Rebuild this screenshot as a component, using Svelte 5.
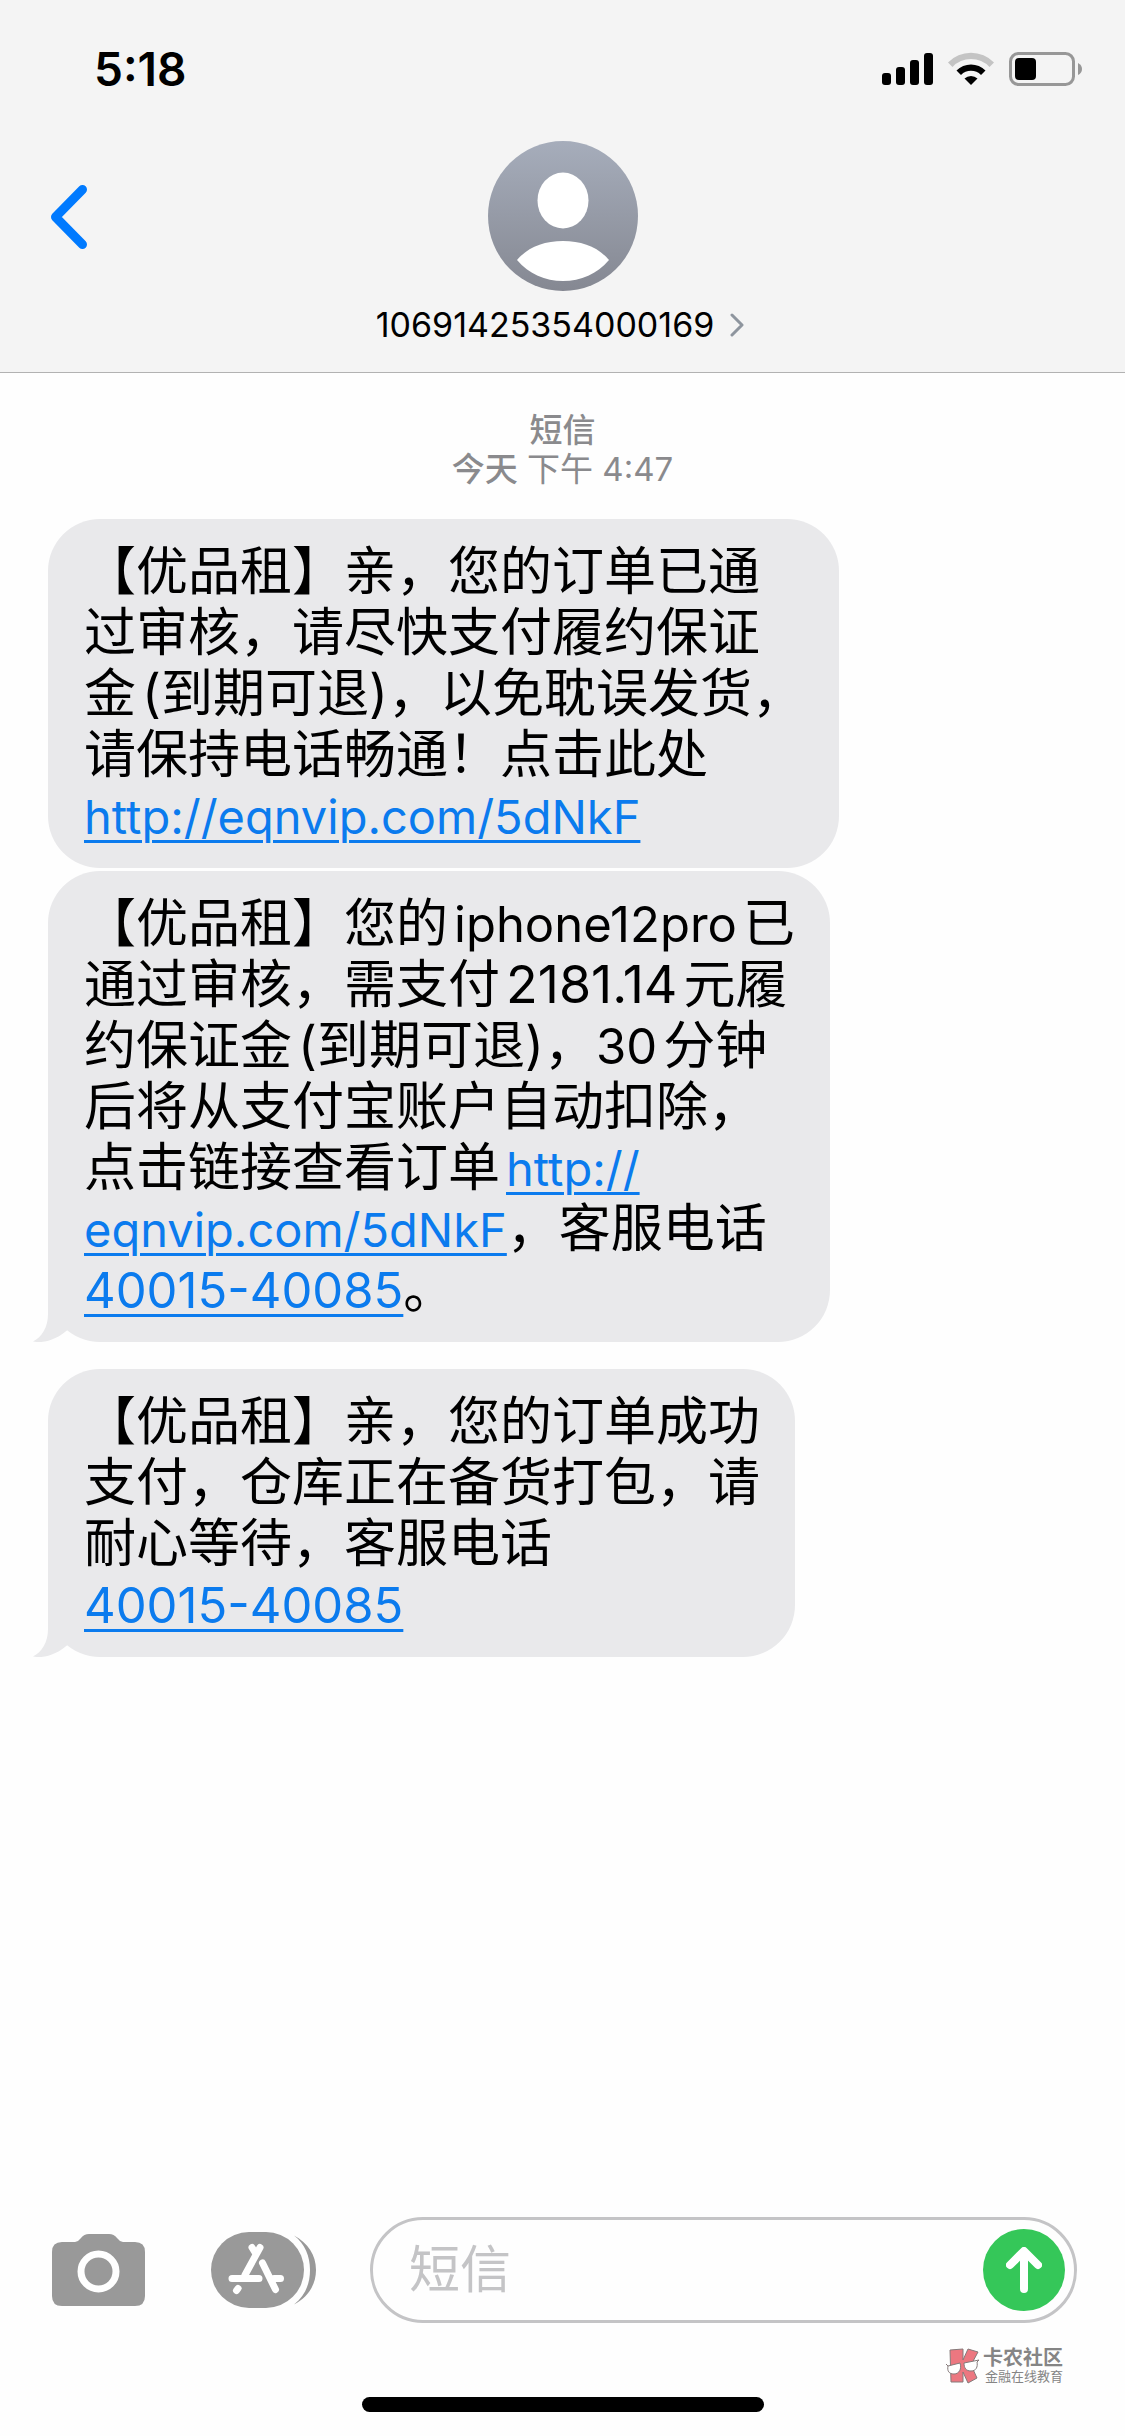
<script>
  let draft = '';

  const time = '5:18';
  const sender = '10691425354000169';

  // each line is a list of parts, k is the class of the part
  const messages = [
    {
      tail: false,
      lines: [
        [{ t: '【优品租】亲，您的订单已通' }],
        [{ t: '过审核，请尽快支付履约保证' }],
        [{ t: '金' }, { t: '(', k: 'open' }, { t: '到期可退' }, { t: ')' }, { t: '，以免耽误发货，' }],
        [{ t: '请保持电话畅通！点击此处' }],
        [{ t: 'http://eqnvip.com/5dNkF', k: 'link', href: 'http://eqnvip.com/5dNkF' }]
      ]
    },
    {
      tail: true,
      lines: [
        [{ t: '【优品租】您的' }, { t: 'iphone12pro', k: 'latin' }, { t: '已' }],
        [{ t: '通过审核，需支付' }, { t: '2181.14', k: 'number' }, { t: '元履' }],
        [{ t: '约保证金' }, { t: '(', k: 'open' }, { t: '到期可退' }, { t: ')' }, { t: '，' }, { t: '30', k: 'count' }, { t: '分钟' }],
        [{ t: '后将从支付宝账户自动扣除，' }],
        [{ t: '点击链接查看订单' }, { t: 'http://', k: 'link inset', href: 'http://eqnvip.com/5dNkF' }],
        [{ t: 'eqnvip.com/5dNkF', k: 'link', href: 'http://eqnvip.com/5dNkF' }, { t: '，客服电话' }],
        [{ t: '40015-40085', k: 'link tel', href: 'tel:4001540085' }, { t: '。' }]
      ]
    },
    {
      tail: true,
      lines: [
        [{ t: '【优品租】亲，您的订单成功' }],
        [{ t: '支付，仓库正在备货打包，请' }],
        [{ t: '耐心等待，客服电话' }],
        [{ t: '40015-40085', k: 'link tel', href: 'tel:4001540085' }]
      ]
    }
  ];
</script>

<div class="screen">
  <header>
    <div class="status">
      <span class="time">{time}</span>
      <svg width="200" height="34" viewBox="0 0 200 34" aria-hidden="true">
        <rect x="0" y="21" width="9" height="12" rx="3" />
        <rect x="14" y="15" width="9" height="18" rx="3" />
        <rect x="28" y="8" width="9" height="25" rx="3" />
        <rect x="42" y="1" width="9" height="32" rx="3" />
        <path d="M66 10.500A32 32 0 0 1 112 10.500L107.500 15A25.500 25.500 0 0 0 70.500 15Z" fill="#c4c4c4" />
        <path d="M74.500 18.500A20.500 20.500 0 0 1 103.500 18.500L99 23A14 14 0 0 0 79 23Z" />
        <path d="M82.500 26.500A9.500 9.500 0 0 1 95.500 26.500L89 33Z" />
        <rect x="128.500" y="1.500" width="63" height="31" rx="8" fill="none" stroke="#979797" stroke-width="3" />
        <rect x="133" y="6" width="21" height="22" rx="4" />
        <path d="M196 11Q200 13 200 17T196 23Z" fill="#979797" />
      </svg>
    </div>
    <div class="nav">
      <button class="back" aria-label="返回">
        <svg width="38" height="68" viewBox="0 0 38 68">
          <path d="M32.500 6.500L5.500 34L32.500 61.500" fill="none" stroke="#007aff" stroke-width="9" stroke-linecap="round" stroke-linejoin="round" />
        </svg>
      </button>
      <button class="contact">
        <svg width="150" height="150" viewBox="0 0 150 150" aria-hidden="true">
          <defs>
            <linearGradient id="avatar" x1="0" y1="0" x2="0" y2="1">
              <stop offset="0" stop-color="#a6adbb" />
              <stop offset="1" stop-color="#858892" />
            </linearGradient>
          </defs>
          <circle cx="75" cy="75" r="75" fill="url(#avatar)" />
          <ellipse cx="75" cy="59.500" rx="25.500" ry="28" fill="#fff" />
          <path d="M29 119C40 106 56 100 75 100S110 106 121 119C109 133 93 140 75 140S41 133 29 119Z" fill="#fff" />
        </svg>
        <span class="sender">
          {sender}
          <svg width="14" height="24" viewBox="0 0 14 24" aria-hidden="true">
            <path d="M2 2L12 12L2 22" fill="none" stroke="#8e959e" stroke-width="3" stroke-linecap="round" stroke-linejoin="round" />
          </svg>
        </span>
      </button>
    </div>
  </header>

  <main>
    <p class="stamp"><b>短信</b><br /><b>今天</b> 下午 4:47</p>

    {#each messages as message}
      <div class="bubble" class:tail={message.tail}>
        {#each message.lines as line}
          <p>{#each line as part}{#if part.href}<a class={part.k} href={part.href}>{part.t}</a>{:else}<span class={part.k}>{part.t}</span>{/if}{/each}</p>
        {/each}
        {#if message.tail}
          <svg class="tip" width="40" height="60" viewBox="0 0 40 60" aria-hidden="true">
            <path d="M15 0V32C15 45 9 55 0 59.500C13 62 25 56 34.500 48L40 40V0Z" fill="#e9e9eb" />
          </svg>
        {/if}
      </div>
    {/each}
  </main>

  <footer>
    <form class="composer" on:submit|preventDefault={() => (draft = '')}>
      <button type="button" aria-label="相机">
        <svg width="94" height="72" viewBox="0 0 94 72">
          <path d="M10 8H23Q26 8 28 5L29 4Q32 0 37 0H57Q62 0 65 4L66 5Q68 8 71 8H83Q93 8 93 18V62Q93 72 83 72H10Q0 72 0 62V18Q0 8 10 8Z" fill="#999" />
          <circle cx="46.500" cy="37.500" r="17.500" fill="none" stroke="#fff" stroke-width="7" />
        </svg>
      </button>
      <button type="button" class="apps" aria-label="应用">
        <svg width="106" height="76" viewBox="0 0 106 76">
          <rect width="93" height="76" rx="38" fill="#999" />
          <path d="M83 3.500C97 11 105 23 105 38S97 65 83 72.500C94 64 99 52 99 38S94 12 83 3.500Z" fill="#999" />
          <g fill="none" stroke="#fff" stroke-width="7" stroke-linecap="round">
            <path d="M49 15.500L34 43M41 15.500L45 22" />
            <path d="M21 46.500H48M63 46.500H69.500" />
            <path d="M51.500 31L64.500 57.500" />
            <path d="M27 56.500L25.500 58.500" />
          </g>
        </svg>
      </button>
      <div class="field">
        <input type="text" aria-label="短信" placeholder="短信" bind:value={draft} />
        <button class="send" aria-label="发送">
          <svg width="36" height="46" viewBox="0 0 36 46">
            <path d="M18 42V5M4 18L18 4L32 18" fill="none" stroke="#fff" stroke-width="8" stroke-linecap="round" stroke-linejoin="round" />
          </svg>
        </button>
      </div>
    </form>

    <div class="brand">
      <svg width="36" height="36" viewBox="0 0 36 36" aria-hidden="true">
        <path d="M5 2L18 1L18 12L23 1L33 4L26 17L32 30L23 35L18 24V34H6Z" fill="#ec7780" stroke="#857a7a" stroke-width="1" />
        <g fill="#fff" stroke="#857a7a" stroke-width="1">
          <path d="M1 16L3 18L15 15C17 21 14 26 9 26S2 23 3 18" />
          <path d="M19 15L34 12L32 14C33 19 31 23 26 23S19 20 19 15Z" />
        </g>
      </svg>
      <div>
        <strong>卡农社区</strong>
        <small>金融在线教育</small>
      </div>
    </div>
    <div class="home"></div>
  </footer>
</div>

<style>
  :global(body) {
    margin: 0;
    background: #fefefe;
  }

  .screen {
    display: flex;
    flex-direction: column;
    min-height: 100vh;
    font-family: Inter, "Noto Sans CJK SC", sans-serif;
    color: #000;
  }

  button {
    display: flex;
    padding: 0;
    border: none;
    background: none;
    font: inherit;
    color: inherit;
    cursor: pointer;
  }

  p {
    margin: 0;
  }

  header {
    background: #f4f4f4;
    border-bottom: 1px solid #b2b2b2;
  }

  .status {
    display: flex;
    justify-content: space-between;
    align-items: center;
    padding: 39px 43px 0 94px;
  }

  .time {
    font-size: 46px;
    font-weight: 600;
    line-height: 60px;
  }

  .nav {
    display: grid;
    grid-template-columns: 1fr auto 1fr;
    padding: 42px 50px 25px;
  }

  .back {
    justify-self: start;
    align-self: start;
    margin-top: 42px;
  }

  .contact {
    flex-direction: column;
    align-items: center;
  }

  .sender {
    display: flex;
    align-items: center;
    gap: 16px;
    margin-top: 12px;
    padding-right: 5px;
    font-size: 34px;
    line-height: 44px;
  }

  main {
    flex: 1;
    display: flex;
    flex-direction: column;
    align-items: flex-start;
    padding: 38px 48px;
  }

  .stamp {
    align-self: center;
    margin-bottom: 30px;
    font-size: 33px;
    line-height: 39px;
    text-align: center;
    color: #8a8a8d;
  }

  .stamp b {
    font-weight: 500;
  }

  .bubble {
    position: relative;
    margin-bottom: 3px;
    padding: 22px 35px 22px 36px;
    border-radius: 52px;
    background: #e9e9eb;
    font-size: 52px;
    line-height: 61px;
    white-space: nowrap;
    text-spacing-trim: space-all;
  }

  .bubble p {
    height: 61px;
  }

  .tail {
    margin-bottom: 27px;
  }

  .tip {
    position: absolute;
    left: -15px;
    bottom: 0;
  }

  .latin {
    margin: 0 6px;
    font-size: 49px;
  }

  .number {
    margin: 0 6px;
  }

  .count {
    margin-right: 6px;
    font-size: 49px;
  }

  .open,
  .inset {
    margin-left: 6px;
  }

  .link {
    font-size: 47px;
    color: #0b7bee;
    text-decoration-thickness: 3px;
    text-underline-offset: 6px;
  }

  .tel {
    font-size: 49px;
  }

  footer {
    padding-bottom: 24px;
  }

  .composer {
    display: flex;
    align-items: center;
    padding: 0 48px 0 52px;
  }

  .apps {
    margin: 0 53px 0 65px;
  }

  .field {
    flex: 1;
    display: flex;
    align-items: center;
    min-width: 0;
    padding: 9px 9px 9px 36px;
    border: 3px solid #c4c4c6;
    border-radius: 53px;
  }

  input {
    flex: 1;
    min-width: 0;
    padding: 0;
    border: none;
    outline: none;
    background: none;
    font: inherit;
    font-size: 51px;
    line-height: 60px;
  }

  input::placeholder {
    color: #c4c4c6;
    opacity: 1;
  }

  .send {
    align-items: center;
    justify-content: center;
    width: 82px;
    height: 82px;
    border-radius: 50%;
    background: #35c759;
  }

  .brand {
    display: flex;
    justify-content: flex-end;
    align-items: center;
    gap: 2px;
    margin: 25px 62px 0 0;
    color: #858585;
  }

  .brand strong,
  .brand small {
    display: block;
    font-size: 20px;
    line-height: 20px;
  }

  .brand small {
    font-size: 13px;
    line-height: 16px;
    text-align: right;
  }

  .home {
    width: 402px;
    height: 15px;
    margin: 13px auto 0;
    border-radius: 8px;
    background: #000;
  }
</style>
